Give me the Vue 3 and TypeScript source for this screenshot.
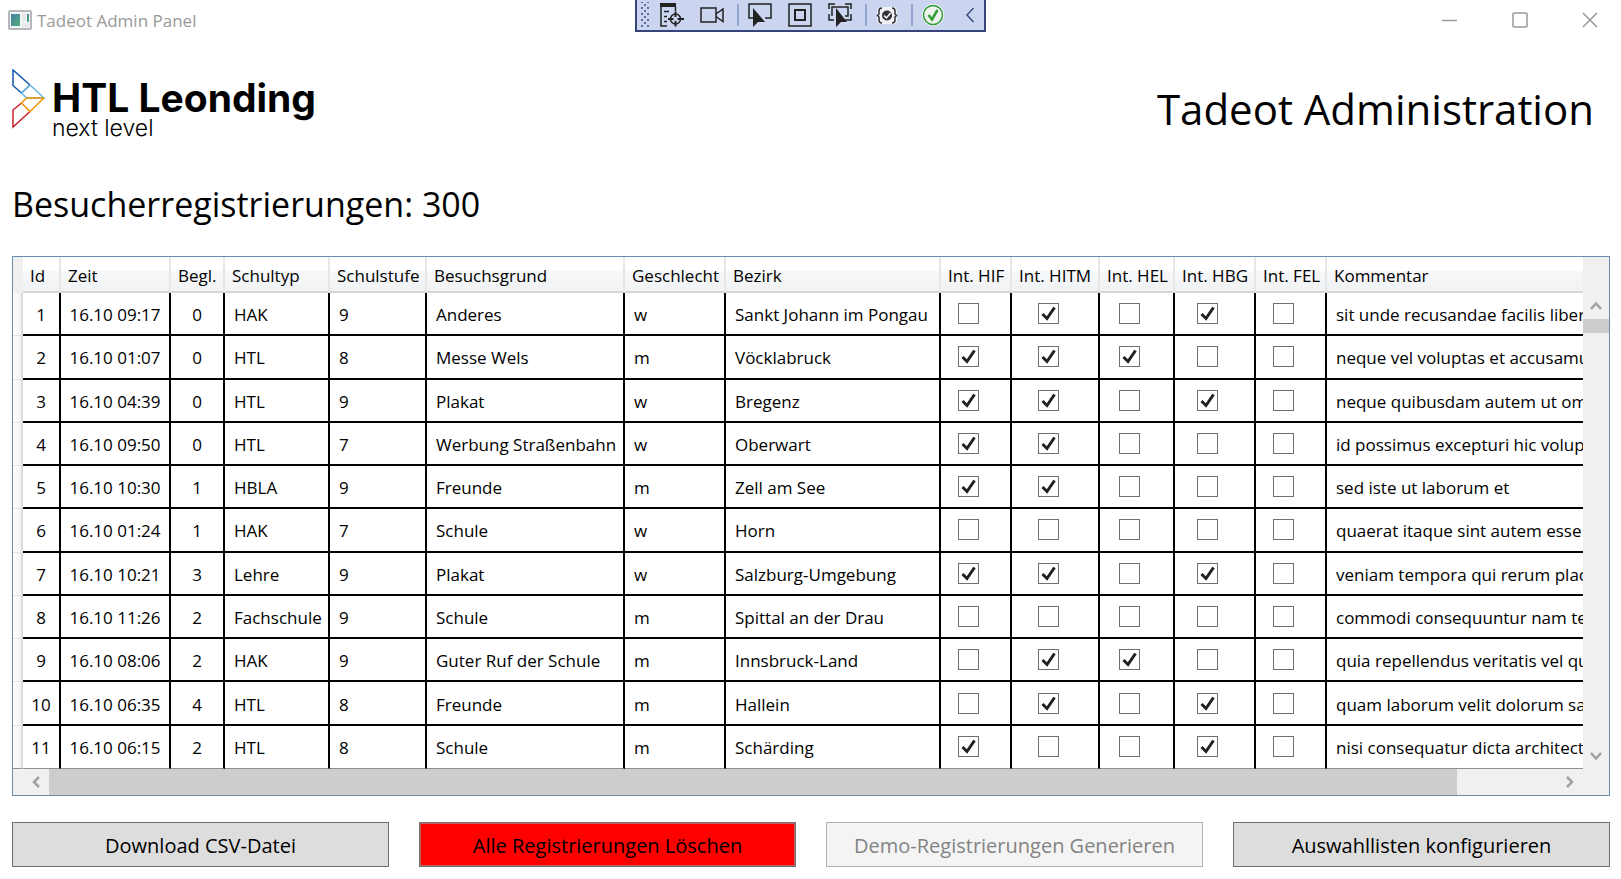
<script setup lang="ts">
import { ref } from 'vue'

interface Column {
  key: string
  label: string
}

interface Registration {
  id: number
  time: string
  companions: number
  schoolType: string
  level: number
  reason: string
  gender: string
  district: string
  interests: boolean[]
  comment: string
}

const columns: Column[] = [
  { key: 'id', label: 'Id' },
  { key: 'time', label: 'Zeit' },
  { key: 'comp', label: 'Begl.' },
  { key: 'type', label: 'Schultyp' },
  { key: 'level', label: 'Schulstufe' },
  { key: 'reason', label: 'Besuchsgrund' },
  { key: 'gender', label: 'Geschlecht' },
  { key: 'district', label: 'Bezirk' },
  { key: 'hif', label: 'Int. HIF' },
  { key: 'hitm', label: 'Int. HITM' },
  { key: 'hel', label: 'Int. HEL' },
  { key: 'hbg', label: 'Int. HBG' },
  { key: 'fel', label: 'Int. FEL' },
  { key: 'comment', label: 'Kommentar' },
]

const interestNames = ['HIF', 'HITM', 'HEL', 'HBG', 'FEL']

function row(
  id: number, time: string, companions: number, schoolType: string, level: number,
  reason: string, gender: string, district: string, flags: string, comment: string,
): Registration {
  return {
    id, time: '16.10 ' + time, companions, schoolType, level, reason, gender, district,
    interests: flags.split('').map((f) => f === 'x'), comment,
  }
}

const rows = ref<Registration[]>([
  row(1, '09:17', 0, 'HAK', 9, 'Anderes', 'w', 'Sankt Johann im Pongau', '-x-x-', 'sit unde recusandae facilis libero'),
  row(2, '01:07', 0, 'HTL', 8, 'Messe Wels', 'm', 'Vöcklabruck', 'xxx--', 'neque vel voluptas et accusamus'),
  row(3, '04:39', 0, 'HTL', 9, 'Plakat', 'w', 'Bregenz', 'xx-x-', 'neque quibusdam autem ut omnis'),
  row(4, '09:50', 0, 'HTL', 7, 'Werbung Straßenbahn', 'w', 'Oberwart', 'xx---', 'id possimus excepturi hic voluptas'),
  row(5, '10:30', 1, 'HBLA', 9, 'Freunde', 'm', 'Zell am See', 'xx---', 'sed iste ut laborum et'),
  row(6, '01:24', 1, 'HAK', 7, 'Schule', 'w', 'Horn', '-----', 'quaerat itaque sint autem esse'),
  row(7, '10:21', 3, 'Lehre', 9, 'Plakat', 'w', 'Salzburg-Umgebung', 'xx-x-', 'veniam tempora qui rerum placeat'),
  row(8, '11:26', 2, 'Fachschule', 9, 'Schule', 'm', 'Spittal an der Drau', '-----', 'commodi consequuntur nam tempora'),
  row(9, '08:06', 2, 'HAK', 9, 'Guter Ruf der Schule', 'm', 'Innsbruck-Land', '-xx--', 'quia repellendus veritatis vel quia'),
  row(10, '06:35', 4, 'HTL', 8, 'Freunde', 'm', 'Hallein', '-x-x-', 'quam laborum velit dolorum sapiente'),
  row(11, '06:15', 2, 'HTL', 8, 'Schule', 'm', 'Schärding', 'x--x-', 'nisi consequatur dicta architecto'),
])

const total = ref(300)
</script>

<template>
  <div class="window">
    <header class="titlebar">
      <svg class="app-icon" width="24" height="20" viewBox="0 0 24 20" aria-hidden="true">
        <defs>
          <linearGradient id="pane" x1="0" y1="0" x2="1" y2="1">
            <stop offset="0" stop-color="#4a7fa5" />
            <stop offset="1" stop-color="#4fae7c" />
          </linearGradient>
        </defs>
        <rect x="1" y="1" width="22" height="18" rx="1" fill="#f3f4f6" stroke="#b4b7bd" stroke-width="2" />
        <rect x="3" y="4" width="9" height="12" fill="url(#pane)" />
        <rect x="14" y="4" width="4" height="7" fill="#e4e6e8" />
        <rect x="19" y="4" width="2" height="8" fill="url(#pane)" />
        <rect x="14" y="13" width="7" height="4" fill="#e4e6e8" />
      </svg>
      <span class="window-title">Tadeot Admin Panel</span>
      <div class="window-controls">
        <button type="button" aria-label="Minimieren">
          <svg width="16" height="16" viewBox="0 0 16 16"><path d="M0 8.5H15" /></svg>
        </button>
        <button type="button" aria-label="Maximieren">
          <svg width="16" height="16" viewBox="0 0 16 16"><rect x="1" y="1" width="14" height="14" rx="1" /></svg>
        </button>
        <button type="button" aria-label="Schließen">
          <svg width="16" height="16" viewBox="0 0 16 16"><path d="M1 1L15 15M15 1L1 15" /></svg>
        </button>
      </div>
    </header>

    <div class="debugbar" role="toolbar" aria-label="Debug">
      <svg class="grip" width="10" height="28" viewBox="0 0 10 28" aria-hidden="true">
        <defs>
          <pattern id="dots" width="6" height="6" patternUnits="userSpaceOnUse">
            <rect width="2" height="2" fill="#5f6c9d" />
            <rect x="3" y="3" width="2" height="2" fill="#5f6c9d" />
          </pattern>
        </defs>
        <rect width="8" height="26" y="1" fill="url(#dots)" />
      </svg>
      <button type="button" class="tool" aria-label="Visuelle Struktur">
        <svg width="24" height="26" viewBox="0 0 24 26" fill="none" stroke="#222" stroke-width="1.5">
          <rect x="0" y="1" width="16" height="4" fill="#222" stroke="none" />
          <path d="M1 5V24H7M4 9.500H9M4 14.500H7M4 19.500H7M15.500 5V9" />
          <circle cx="15.500" cy="17" r="5" />
          <path d="M15.500 9.500V15M15.500 19V24.500M8 17H13.500M17.500 17H24" stroke-width="2" />
        </svg>
      </button>
      <button type="button" class="tool" aria-label="Aufnahme">
        <svg width="24" height="26" viewBox="0 0 24 26" fill="none" stroke="#222" stroke-width="1.5">
          <rect x="1" y="6" width="15" height="14" />
          <path d="M16 12L23 7V19.500L16 14.500" />
        </svg>
      </button>
      <span class="sep" />
      <button type="button" class="tool" aria-label="Element auswählen">
        <svg width="24" height="26" viewBox="0 0 24 26">
          <path d="M6 16H1V2H23V16H17" fill="none" stroke="#222" stroke-width="1.500" />
          <path d="M5 6V25L10 20H17Z" fill="#222" />
        </svg>
      </button>
      <button type="button" class="tool" aria-label="Layout anzeigen">
        <svg width="24" height="26" viewBox="0 0 24 26" fill="none" stroke="#222" stroke-width="1.500">
          <rect x="1" y="2" width="22" height="22" />
          <rect x="7" y="8" width="10" height="10" stroke-width="2" />
        </svg>
      </button>
      <button type="button" class="tool" aria-label="Fokus verfolgen">
        <svg width="24" height="26" viewBox="0 0 24 26" fill="none" stroke="#222" stroke-width="1.500">
          <path d="M1 7V2H7M17 2H23V7M1 12V18H6M23 12V18H17" />
          <path d="M4 14V5H20V14H17" />
          <path d="M8 6V25L13 20H19Z" fill="#222" stroke="none" />
        </svg>
      </button>
      <span class="sep" />
      <button type="button" class="tool small" aria-label="Bindungsfehler">
        <svg width="22" height="26" viewBox="0 0 22 26" fill="none">
          <rect x="1" y="5" width="20" height="17" rx="4" fill="#f0f2f8" />
          <path d="M6 6Q3 6 3 9V12L1.500 13.500L3 15V18Q3 21 6 21M16 6Q19 6 19 9V12L20.500 13.500L19 15V18Q19 21 16 21" stroke="#333" stroke-width="1.500" />
          <circle cx="11" cy="13.500" r="5" fill="#333" />
          <path d="M8 13.500L10.500 16L14.500 11" stroke="#fff" stroke-width="1.500" />
        </svg>
      </button>
      <span class="sep" />
      <button type="button" class="tool small" aria-label="Hot Reload">
        <svg width="22" height="26" viewBox="0 0 22 26" fill="none">
          <circle cx="11" cy="13" r="11" fill="#f4f6fa" />
          <circle cx="11" cy="13" r="9.500" fill="#eef3ee" stroke="#2e9b34" stroke-width="1.500" />
          <path d="M6.500 13L10 17.500L15.500 8" stroke="#2e9b34" stroke-width="2.500" />
        </svg>
      </button>
      <button type="button" class="tool collapse" aria-label="Einklappen">
        <svg width="8" height="26" viewBox="0 0 8 26" fill="none" stroke="#3b4a7c" stroke-width="1.500">
          <path d="M7.500 6L1 13L7.500 20" />
        </svg>
      </button>
    </div>

    <main class="content">
      <div class="brand-row">
        <div class="brand">
          <svg width="34" height="60" viewBox="0 0 34 60" fill="none" stroke-width="1.500" aria-hidden="true">
            <path d="M18 16L9.500 24L1 16.500V1L18 16" stroke="#0f5bab" />
            <path d="M18 16L32 29H14.500L9.500 24L18 16" stroke="#6bb7e2" />
            <path d="M9.500 34L1 41V58L18 42.500" stroke="#c8202f" />
            <path d="M32 29H14.500L9.500 34L18 42.500L32 29" stroke="#f39200" />
          </svg>
          <div class="brand-text">
            <span class="brand-name">HTL Leonding</span>
            <span class="brand-claim">next level</span>
          </div>
        </div>
        <h1>Tadeot Administration</h1>
      </div>

      <h2>Besucherregistrierungen: {{ total }}</h2>

      <section class="grid">
        <div class="grid-view">
          <table>
            <colgroup>
              <col class="c-head">
              <col v-for="c in columns" :key="c.key" :class="'c-' + c.key">
            </colgroup>
            <thead>
              <tr>
                <td class="corner" />
                <th v-for="c in columns" :key="c.key" scope="col">{{ c.label }}</th>
              </tr>
            </thead>
            <tbody>
              <tr v-for="r in rows" :key="r.id">
                <td class="row-head" />
                <td class="center">{{ r.id }}</td>
                <td class="center">{{ r.time }}</td>
                <td class="center">{{ r.companions }}</td>
                <td>{{ r.schoolType }}</td>
                <td>{{ r.level }}</td>
                <td>{{ r.reason }}</td>
                <td>{{ r.gender }}</td>
                <td>{{ r.district }}</td>
                <td v-for="(name, i) in interestNames" :key="name" class="check">
                  <input v-model="r.interests[i]" type="checkbox" :aria-label="'Int. ' + name + ', Id ' + r.id">
                </td>
                <td class="comment">{{ r.comment }}</td>
              </tr>
            </tbody>
          </table>
          <div class="vscroll">
            <button type="button" aria-label="Nach oben">
              <svg width="12" height="10" viewBox="0 0 12 10"><path d="M1 8L6 2.500L11 8" /></svg>
            </button>
            <div class="vthumb" />
            <button type="button" class="down" aria-label="Nach unten">
              <svg width="12" height="10" viewBox="0 0 12 10"><path d="M1 2L6 7.500L11 2" /></svg>
            </button>
          </div>
        </div>
        <div class="hscroll">
          <button type="button" class="left" aria-label="Nach links">
            <svg width="10" height="12" viewBox="0 0 10 12"><path d="M8 1L3 6L8 11" /></svg>
          </button>
          <div class="htrack"><div class="hthumb" /></div>
          <button type="button" class="right" aria-label="Nach rechts">
            <svg width="10" height="12" viewBox="0 0 10 12"><path d="M2 1L7 6L2 11" /></svg>
          </button>
        </div>
      </section>

      <div class="actions">
        <button type="button">Download CSV-Datei</button>
        <button type="button" class="danger">Alle Registrierungen Löschen</button>
        <button type="button" disabled>Demo-Registrierungen Generieren</button>
        <button type="button">Auswahllisten konfigurieren</button>
      </div>
    </main>
  </div>
</template>

<style>
body {
  margin: 0;
  background: #fff;
}
</style>

<style scoped>
.window {
  position: relative;
  box-sizing: border-box;
  display: flex;
  flex-direction: column;
  min-height: 100vh;
  background: #fff;
  color: #000;
  font-family: "Open Sans", "Noto Sans", sans-serif;
  font-size: 17px;
}

button {
  font-family: inherit;
  color: inherit;
}

.titlebar {
  display: flex;
  align-items: center;
  height: 40px;
  padding-left: 8px;
}

.window-title {
  margin-left: 5px;
  color: #999;
}

.window-controls {
  display: flex;
  gap: 8px;
  margin-left: auto;
}

.window-controls button {
  display: flex;
  align-items: center;
  justify-content: center;
  width: 62px;
  height: 40px;
  padding: 0;
  border: 0;
  background: none;
}

.window-controls svg {
  fill: none;
  stroke: #999;
  stroke-width: 1.5;
}

.debugbar {
  position: absolute;
  top: 0;
  left: 0;
  right: 0;
  box-sizing: border-box;
  display: flex;
  align-items: center;
  width: 351px;
  height: 32px;
  margin: 0 auto;
  padding-left: 4px;
  border: 2px solid #36447a;
  border-top: 0;
  background: #cbd5f0;
}

.grip {
  margin-right: 9px;
}

.tool {
  flex: none;
  display: flex;
  width: 24px;
  padding: 0;
  border: 0;
  background: none;
}

.tool + .tool {
  margin-left: 16px;
}

.tool.small {
  width: 22px;
}

.tool.collapse {
  width: 8px;
  margin-left: 22px;
}

.sep {
  flex: none;
  width: 2px;
  height: 22px;
  margin: 0 9px 0 13px;
  background: #93a6d2;
}

.content {
  flex: 1;
  display: flex;
  flex-direction: column;
  padding: 0 11px 12px 12px;
}

.brand-row {
  display: flex;
  justify-content: space-between;
  align-items: flex-start;
  height: 130px;
  padding-top: 29px;
  box-sizing: border-box;
}

.brand {
  display: flex;
  gap: 6px;
}

.brand-text {
  display: flex;
  flex-direction: column;
  padding-top: 7px;
  font-family: Inter, "Open Sans", sans-serif;
}

.brand-name {
  font-size: 39px;
  font-weight: 700;
  line-height: 44px;
}

.brand-claim {
  font-size: 23px;
  font-weight: 300;
  line-height: 16px;
}

h1 {
  margin: 10px 16px 0 0;
  font-size: 42px;
  font-weight: 400;
  line-height: 60px;
}

h2 {
  margin: 8px 0 0;
  font-size: 34px;
  font-weight: 400;
  line-height: 52px;
}

.grid {
  flex: 1;
  display: flex;
  flex-direction: column;
  margin-top: 26px;
  border: 1px solid #688caf;
}

.grid-view {
  flex: 1;
  display: grid;
  grid-template-columns: minmax(0, 1fr) 26px;
}

table {
  width: 100%;
  height: 100%;
  table-layout: fixed;
  border-collapse: separate;
  border-spacing: 0;
}

.c-head { width: 10px; }
.c-id { width: 38px; }
.c-time { width: 110px; }
.c-comp { width: 54px; }
.c-type { width: 105px; }
.c-level { width: 97px; }
.c-reason { width: 198px; }
.c-gender { width: 101px; }
.c-district { width: 215px; }
.c-hif { width: 71px; }
.c-hitm { width: 88px; }
.c-hel { width: 75px; }
.c-hbg { width: 81px; }
.c-fel { width: 71px; }

th,
td {
  box-sizing: border-box;
  overflow: hidden;
  padding: 3px 0 0 9px;
  white-space: nowrap;
  text-align: left;
  line-height: 24px;
}

th {
  height: 36px;
  padding-left: 7px;
  border-right: 2px solid #e6e7e9;
  border-bottom: 2px solid #d5d5d5;
  background: linear-gradient(#fff 0, #fff 40%, #f7f8fa 41%, #f1f2f4 100%);
  font-weight: 400;
}

td {
  height: 43px;
  border-right: 2px solid #000;
  border-bottom: 2px solid #000;
}

tbody tr:last-child td {
  border-bottom: 1px solid #8f8f8f;
}

th:last-child,
td:last-child {
  border-right: 0;
}

td.corner {
  height: 36px;
  padding: 0;
  border: 0;
  background: #f0f0f0;
}

td.row-head {
  padding: 0;
  border-right: 2px solid #dcdcdc;
  border-bottom: 1px solid #e2e2e2;
  background: linear-gradient(90deg, #fff, #f1f2f4);
}

td.center {
  padding-left: 0;
  text-align: center;
}

td.check {
  padding: 0 14px 0 0;
  text-align: center;
}

input[type="checkbox"] {
  appearance: none;
  display: block;
  box-sizing: border-box;
  width: 21px;
  height: 21px;
  margin: 0 auto;
  border: 1px solid #707070;
  background: #fff;
}

input[type="checkbox"]:checked {
  background: #fff url("data:image/svg+xml,%3Csvg xmlns='http://www.w3.org/2000/svg' viewBox='0 0 19 19'%3E%3Cpath d='M3.500 10L8 14.500L15.500 3.500' fill='none' stroke='%23212121' stroke-width='3'/%3E%3C/svg%3E") center / 19px 19px no-repeat;
}

.vscroll,
.hscroll {
  display: flex;
  background: #f0f0f0;
}

.vscroll {
  flex-direction: column;
  padding-top: 36px;
}

.vscroll button,
.hscroll button {
  display: flex;
  align-items: center;
  justify-content: center;
  padding: 0;
  border: 0;
  background: none;
}

.vscroll button {
  height: 26px;
}

.vscroll .down {
  margin-top: auto;
}

.vscroll svg,
.hscroll svg {
  fill: none;
  stroke: #a0a0a0;
  stroke-width: 2.5;
}

.vthumb {
  height: 14px;
  background: #cdcdcd;
}

.hscroll {
  height: 26px;
  padding: 0 26px 0 10px;
}

.hscroll button {
  width: 26px;
}

.htrack {
  flex: 1;
}

.hthumb {
  width: 93.4%;
  height: 100%;
  background: #cdcdcd;
}

.actions {
  display: grid;
  grid-template-columns: repeat(4, 1fr);
  gap: 30px;
  margin-top: 26px;
}

.actions button {
  height: 45px;
  padding: 2px 0 0;
  border: 1px solid #707070;
  background: #ddd;
  font-size: 20px;
}

.actions .danger {
  background: #f00;
  box-shadow: inset 0 0 0 1px #c06060;
}

.actions button:disabled {
  border-color: #adb2b5;
  background: #f4f4f4;
  color: #838383;
}
</style>
